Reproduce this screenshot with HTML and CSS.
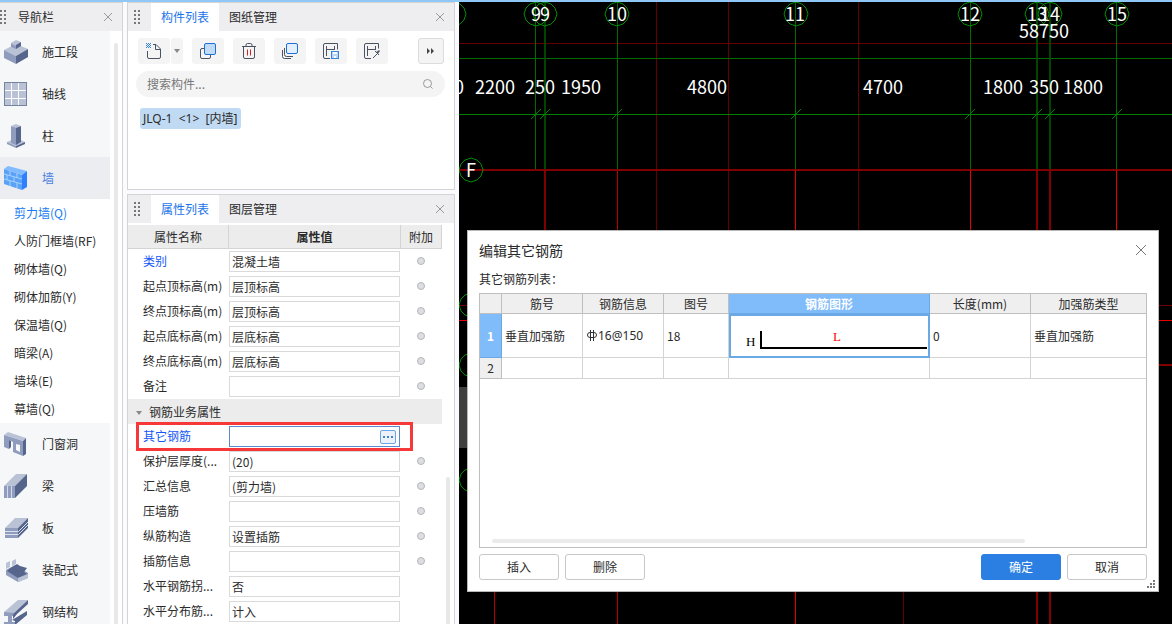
FILE: index.html
```html
<!DOCTYPE html>
<html lang="zh-CN">
<head>
<meta charset="utf-8">
<title>编辑其它钢筋</title>
<link rel="stylesheet" href="styles.css">
</head>
<body>
<div class="app">
  <nav class="nav">
    <header class="bar nav-bar">
      <svg class="grip" width="6" height="14" viewBox="0 0 6 14"><path d="M1 0v14M5 0v14"/></svg>
      <h1 class="nav-title">导航栏</h1>
      <button class="close" type="button" aria-label="关闭导航栏"><svg width="10" height="10" viewBox="0 0 10 10"><path d="M1 1l8 8M9 1l-8 8"/></svg></button>
    </header>
    <div class="nav-body">
      <div class="nav-list">
        <a class="nav-item" href="#"><svg width="24" height="24" viewBox="0 0 24 24"><path fill="#bac2d6" d="M0 10L12 4l12 5-12 7z"/><path fill="#8f9cbd" d="M0 10l12 6v8L0 18z"/><path fill="#56658b" d="M12 16l12-7v8l-12 7z"/><path fill="#bac2d6" d="M7 3l5-3 5 2-5 4z"/><path fill="#8f9cbd" d="M7 3l5 3v3L7 7z"/><path fill="#56658b" d="M12 5l5-3v4l-5 3z"/></svg>施工段</a>
        <a class="nav-item" href="#"><svg width="24" height="24" viewBox="0 0 24 24"><path fill="#76849f" d="M0 0h23v24H0z"/><path fill="#bac2d6" d="M1 1h21v22H1z"/><path stroke="#fff" fill="none" d="M7.500 1v22M14.500 1v22M1 8.500h21M1 16.500h21"/></svg>轴线</a>
        <a class="nav-item" href="#"><svg width="24" height="24" viewBox="0 0 24 24"><path fill="#bac2d6" d="M3 18l9-4 9 4-9 4z"/><path fill="#8f9cbd" d="M3 18l9 4v2l-9-4z"/><path fill="#56658b" d="M21 18l-9 4v2l9-4z"/><path fill="#8f9cbd" d="M7 2l5 1v18l-5-2z"/><path fill="#56658b" d="M12 3l5-1v16l-5 3z"/><path fill="#bac2d6" d="M7 2l5-2 5 2-5 2z"/></svg>柱</a>
        <a class="nav-item current" href="#"><svg width="24" height="24" viewBox="0 0 24 24"><path fill="#81bbff" d="M0 3l4-3 19 5-5 4z"/><path fill="#5aa2f8" d="M0 3l18 6v15L0 18z"/><path fill="#2f80ff" d="M18 9l5-4v16l-5 3z"/><path stroke="#a8d2ff" fill="none" d="M0 8l18 5M0 13l18 5M6 5v5M13 7v5M3 9v5M10 11v5M6 15v5M13 17v5"/></svg>墙</a>
        <div class="sub-list">
          <a class="current" href="#">剪力墙(Q)</a>
          <a href="#">人防门框墙(RF)</a>
          <a href="#">砌体墙(Q)</a>
          <a href="#">砌体加筋(Y)</a>
          <a href="#">保温墙(Q)</a>
          <a href="#">暗梁(A)</a>
          <a href="#">墙垛(E)</a>
          <a href="#">幕墙(Q)</a>
        </div>
        <a class="nav-item" href="#"><svg width="24" height="24" viewBox="0 0 24 24"><path fill="#bac2d6" d="M0 3l4-3 18 6-3 3z"/><path fill="#8f9cbd" fill-rule="evenodd" d="M0 3l19 6v15L9 20V10L5 8v9L0 15zM12 12v6l4 2v-7z"/><path fill="#56658b" d="M19 9l3-3v16l-3 2zM5 8l2 1v6l-2 2z"/></svg>门窗洞</a>
        <a class="nav-item" href="#"><svg width="24" height="24" viewBox="0 0 24 24"><path fill="#bac2d6" d="M0 12L12 0h11L11 12z"/><path fill="#8f9cbd" d="M0 12h11v12H0z"/><path fill="#56658b" d="M11 12L23 0v12L11 24z"/><path stroke="#d3d9e6" d="M3.500 12v12M7.500 12v12"/></svg>梁</a>
        <a class="nav-item" href="#"><svg width="24" height="24" viewBox="0 0 24 24"><path fill="#bac2d6" d="M1 12L11 2h13L14 12z"/><path fill="#8f9cbd" d="M1 12h13v10H1z"/><path fill="#56658b" d="M14 12L24 2v10L14 22z"/><path stroke="#dce2ed" fill="none" d="M1 15.500h13.500L24 6M1 18.500h13.500L24 9"/></svg>板</a>
        <a class="nav-item" href="#"><svg width="24" height="24" viewBox="0 0 24 24"><path fill="#8f9cbd" d="M2 12l9-5 13 8v5l-10 4-12-7z"/><path fill="#56658b" d="M5 11l8-5 3 2 7 2-3 4 3 2-9 4-11-7z"/><path fill="#bac2d6" d="M14 20l10-4v4l-10 4zM2 5l4-2v6l-4 2zM8 3l4-2v5l-4 2z"/></svg>装配式</a>
        <a class="nav-item" href="#"><svg width="24" height="24" viewBox="0 0 24 24"><path fill="#8f9cbd" d="M0 12h10v4H8v6h3v3H0v-3h4v-6H0z"/><path fill="#bac2d6" d="M0 12L14 0h10L10 13z"/><path fill="#56658b" d="M10 13L24 0v4L13 14l-4 5v-4zM8 20l15-9v4L11 25V21z"/></svg>钢结构</a>
      </div>
      <div class="nav-scroll"></div>
    </div>
  </nav>

  <div class="panels">
    <section class="panel">
      <header class="bar">
        <svg class="grip" width="6" height="14" viewBox="0 0 6 14"><path d="M1 0v14M5 0v14"/></svg>
        <button class="tab active" type="button">构件列表</button>
        <button class="tab" type="button">图纸管理</button>
        <button class="close" type="button" aria-label="关闭构件列表"><svg width="10" height="10" viewBox="0 0 10 10"><path d="M1 1l8 8M9 1l-8 8"/></svg></button>
      </header>
      <div class="toolbar">
        <div class="split">
          <button class="tool" type="button" aria-label="新建"><svg width="16" height="16" viewBox="0 0 16 16"><path class="ink" d="M1.500 8v6q0 1.500 1.500 1.500h10q1.500 0 1.500-1.500V6L10 1.500H7M9.500 2v4.500H14"/><path fill="#2f80e0" d="M0 0h1v1H0zM2 0h1v1H2zM4 0h1v1H4zM1 1h1v1H1zM3 1h1v1H3zM0 2h1v1H0zM2 2h1v1H2zM4 2h1v1H4zM1 3h1v1H1zM3 3h1v1H3zM0 4h1v1H0zM2 4h1v1H2zM4 4h1v1H4z"/></svg></button>
          <button class="tool drop" type="button" aria-label="新建选项"><svg width="6" height="4" viewBox="0 0 6 4"><path fill="#888" d="M0 0h6L3 4z"/></svg></button>
        </div>
        <button class="tool" type="button" aria-label="复制"><svg width="16" height="16" viewBox="0 0 16 16"><path class="ink" d="M4 5.500H2Q.5 5.500.5 7v7q0 1.500 1.500 1.500h7q1.500 0 1.500-1.500v-2"/><rect x="4.500" y=".5" width="11" height="11" rx="1.500" fill="#c3daf5" stroke="#1d70dc"/></svg></button>
        <button class="tool" type="button" aria-label="删除构件"><svg width="16" height="16" viewBox="0 0 16 16"><path class="ink" d="M1 3.500h14M5 3.500V2Q5 .5 6.500 .5h3Q11 .5 11 2v1.500M2.500 4v10q0 1.500 1.500 1.500h8q1.500 0 1.500-1.500V4"/><path stroke="#d6212c" d="M6.500 6.500v6M9.500 6.500v6"/></svg></button>
        <button class="tool" type="button" aria-label="层间复制"><svg width="16" height="16" viewBox="0 0 16 16"><path class="ink" d="M.5 7v6.500q0 2 2 2H9M2.500 5v6.500q0 2 2 2H11"/><rect x="4.500" y=".5" width="11" height="10" rx="1.500" fill="#e4effc" stroke="#1d70dc"/></svg></button>
        <button class="tool" type="button" aria-label="构件存档"><svg width="16" height="16" viewBox="0 0 16 16"><path class="ink" d="M7 15.500H2Q.5 15.500.5 14V2Q.5 .5 2 .5h12.500v6M3.500 3v10M3.500 6.500h8M11.500 3v4"/><rect x="8.500" y="8.500" width="7" height="7" fill="#bcd6f5" stroke="#3584e4"/><path fill="#fff" d="M10 9h4v2h-4zM11 13h2v2h-2z"/></svg></button>
        <button class="tool" type="button" aria-label="构件提取"><svg width="16" height="16" viewBox="0 0 16 16"><path class="ink" d="M7 15.500H2Q.5 15.500.5 14V2Q.5 .5 2 .5h12.500v5M3.500 3v10M3.500 6.500h8M11.500 3v4"/><path class="ink" d="M9 15l4-4M11 8l4 4"/><path fill="#5b6375" d="M12 9l3-2 1 1-2 3z"/></svg></button>
        <button class="tool more" type="button" aria-label="更多"><svg width="8" height="6" viewBox="0 0 8 6"><path fill="#444" d="M0 0l3 3-3 3zM4 0l3 3-3 3z"/></svg></button>
      </div>
      <label class="search">
        <input type="text" placeholder="搜索构件..." aria-label="搜索构件">
        <svg width="12" height="12" viewBox="0 0 12 12"><circle cx="5.500" cy="5.500" r="4" /><path d="M8.500 8.500l2 2"/></svg>
      </label>
      <div class="parts"><button class="part" type="button">JLQ-1&nbsp; &lt;1&gt;&nbsp; [内墙]</button></div>
    </section>

    <section class="panel props">
      <header class="bar">
        <svg class="grip" width="6" height="14" viewBox="0 0 6 14"><path d="M1 0v14M5 0v14"/></svg>
        <button class="tab active" type="button">属性列表</button>
        <button class="tab" type="button">图层管理</button>
        <button class="close" type="button" aria-label="关闭属性列表"><svg width="10" height="10" viewBox="0 0 10 10"><path d="M1 1l8 8M9 1l-8 8"/></svg></button>
      </header>
      <div class="props-body">
        <table class="prop-table">
          <thead><tr><th class="c-name">属性名称</th><th class="c-value">属性值</th><th class="c-extra">附加</th></tr></thead>
          <tbody>
            <tr><td class="key"><label for="p1">类别</label></td><td><input class="field" id="p1" value="混凝土墙"></td><td class="mark"><input type="checkbox" aria-label="附加 类别"></td></tr>
            <tr><td><label for="p2">起点顶标高(m)</label></td><td><input class="field" id="p2" value="层顶标高"></td><td class="mark"><input type="checkbox" aria-label="附加 起点顶标高"></td></tr>
            <tr><td><label for="p3">终点顶标高(m)</label></td><td><input class="field" id="p3" value="层顶标高"></td><td class="mark"><input type="checkbox" aria-label="附加 终点顶标高"></td></tr>
            <tr><td><label for="p4">起点底标高(m)</label></td><td><input class="field" id="p4" value="层底标高"></td><td class="mark"><input type="checkbox" aria-label="附加 起点底标高"></td></tr>
            <tr><td><label for="p5">终点底标高(m)</label></td><td><input class="field" id="p5" value="层底标高"></td><td class="mark"><input type="checkbox" aria-label="附加 终点底标高"></td></tr>
            <tr><td><label for="p6">备注</label></td><td><input class="field" id="p6"></td><td class="mark"><input type="checkbox" aria-label="附加 备注"></td></tr>
            <tr class="group"><th colspan="3"><svg width="6" height="4" viewBox="0 0 6 4"><path fill="#888" d="M0 0h6L3 4z"/></svg>钢筋业务属性</th></tr>
            <tr class="marked"><td class="key"><label for="p7">其它钢筋</label><i class="frame"></i></td><td><div class="field editing"><input id="p7"><button type="button" aria-label="编辑其它钢筋"><svg width="10" height="2" viewBox="0 0 10 2"><path fill="#3a82d6" d="M0 0h2v2H0zM4 0h2v2H4zM8 0h2v2H8z"/></svg></button></div></td><td></td></tr>
            <tr><td><label for="p8">保护层厚度(...</label></td><td><input class="field" id="p8" value="(20)"></td><td class="mark"><input type="checkbox" aria-label="附加 保护层厚度"></td></tr>
            <tr><td><label for="p9">汇总信息</label></td><td><input class="field" id="p9" value="(剪力墙)"></td><td class="mark"><input type="checkbox" aria-label="附加 汇总信息"></td></tr>
            <tr><td><label for="p10">压墙筋</label></td><td><input class="field" id="p10"></td><td class="mark"><input type="checkbox" aria-label="附加 压墙筋"></td></tr>
            <tr><td><label for="p11">纵筋构造</label></td><td><input class="field" id="p11" value="设置插筋"></td><td class="mark"><input type="checkbox" aria-label="附加 纵筋构造"></td></tr>
            <tr><td><label for="p12">插筋信息</label></td><td><input class="field" id="p12"></td><td class="mark"><input type="checkbox" aria-label="附加 插筋信息"></td></tr>
            <tr><td><label for="p13">水平钢筋拐...</label></td><td><input class="field" id="p13" value="否"></td><td></td></tr>
            <tr><td><label for="p14">水平分布筋...</label></td><td><input class="field" id="p14" value="计入"></td><td></td></tr>
          </tbody>
        </table>
        <div class="props-scroll"></div>
      </div>
    </section>
  </div>

  <main class="canvas">
    <svg class="drawing" width="100%" height="100%">
      <defs>
        <path id="ring" d="M0-12L6-10 10-6 12 0 10 6 6 10 0 12-6 10-10 6-12 0-10-6-6-10z" fill="none" stroke="#008c00"/>
        <path id="tick" d="M-5 5L5-5" stroke="#008000"/>
      </defs>
      <g transform="translate(-459 -2)">
        <g stroke="#640000">
          <path d="M459 43.500H2400M656.500 2V560M728.500 2V560M858.500 2V560M903.500 560V1600"/>
        </g>
        <g stroke="#006c00">
          <path d="M459 58.500H2400M535.500 2V170M617.500 2V170M795.500 2V170M970.500 2V170M1116.500 2V170"/>
          <path stroke="#004600" stroke-width="2" d="M545 2V170M1037 2V170M1050 2V170"/>
          <path stroke="#008000" d="M459 114.500H2400"/>
        </g>
        <g stroke="#800000" stroke-width="2">
          <path d="M459 170H2400M1037 170V1600M1050 170V1600M545 170V560M1100 365H2400"/>
          <path stroke="#e80000" stroke-width="1" d="M795.500 170V1600M970.500 170V560M1116.500 170V560M459 320.500H2400"/>
          <path stroke="#b80000" stroke-width="1" d="M617.500 170V1600M494.500 560V1600"/>
          <path stroke="#700000" stroke-width="1" d="M459 305.500H2400"/>
        </g>
        <use href="#ring" x="454" y="14"/><use href="#ring" x="536" y="14"/><use href="#ring" x="545" y="14"/>
        <use href="#ring" x="617" y="14"/><use href="#ring" x="796" y="14"/><use href="#ring" x="970" y="14"/>
        <use href="#ring" x="1037" y="14"/><use href="#ring" x="1050" y="14"/><use href="#ring" x="1117" y="14"/>
        <use href="#ring" x="471" y="170"/><use href="#ring" x="471" y="305"/><use href="#ring" x="471" y="365"/><use href="#ring" x="471" y="480"/>
        <use href="#tick" x="536" y="114"/><use href="#tick" x="545" y="114"/><use href="#tick" x="617" y="114"/><use href="#tick" x="796" y="114"/>
        <use href="#tick" x="970" y="114"/><use href="#tick" x="1037" y="114"/><use href="#tick" x="1050" y="114"/><use href="#tick" x="1117" y="114"/>
        <path fill="#3f3f3f" d="M459 387h10v61h-10z"/>
        <g class="dims">
          <text x="536" y="21">9</text><text x="545" y="21">9</text><text x="617" y="21">10</text><text x="795" y="21">11</text>
          <text x="970" y="21">12</text><text x="1037" y="21">13</text><text x="1050" y="21">14</text><text x="1117" y="21">15</text>
          <text x="1044" y="38">58750</text>
          <text x="459" y="94">0</text><text x="495" y="94">2200</text><text x="540" y="94">250</text><text x="581" y="94">1950</text>
          <text x="707" y="94">4800</text><text x="883" y="94">4700</text><text x="1003" y="94">1800</text><text x="1044" y="94">350</text><text x="1083" y="94">1800</text>
          <text x="471" y="177">F</text>
        </g>
      </g>
    </svg>

    <section class="dialog" role="dialog" aria-labelledby="dlg-title">
      <header class="dialog-head">
        <h2 id="dlg-title">编辑其它钢筋</h2>
        <button class="close" type="button" aria-label="关闭"><svg width="12" height="12" viewBox="0 0 12 12"><path d="M1 1l10 10M11 1L1 11"/></svg></button>
      </header>
      <p class="caption">其它钢筋列表：</p>
      <div class="sheet-box">
        <table class="sheet">
          <thead><tr><th class="w-no"></th><th class="w-mid">筋号</th><th class="w-mid">钢筋信息</th><th class="w-fig">图号</th><th class="w-shape picked">钢筋图形</th><th class="w-len">长度(mm)</th><th>加强筋类型</th></tr></thead>
          <tbody>
            <tr class="tall"><th class="picked">1</th><td>垂直加强筋</td><td><span class="rebar"><svg width="10" height="12" viewBox="0 0 10 12"><path fill="none" stroke="#333" d="M3.500 0v11M6.500 0v11M3 2.500h4Q9.500 2.500 9.500 5T7 7.500H3Q.5 7.500.5 5T3 2.500"/></svg>16@150</span></td><td>18</td>
              <td class="shape"><svg width="197" height="39" viewBox="0 0 197 39"><path fill="none" stroke="#000" stroke-width="2" d="M30 14v17h166"/><text x="15" y="29">H</text><text x="102" y="24" fill="#f00">L</text></svg></td><td>0</td><td>垂直加强筋</td></tr>
            <tr><th>2</th><td></td><td></td><td></td><td></td><td></td><td></td></tr>
          </tbody>
        </table>
        <div class="sheet-scroll"></div>
      </div>
      <footer class="actions">
        <button class="btn" type="button">插入</button>
        <button class="btn" type="button">删除</button>
        <button class="btn primary" type="button">确定</button>
        <button class="btn" type="button">取消</button>
      </footer>
      <svg class="resize" width="8" height="8" viewBox="0 0 8 8"><path fill="#777" d="M6 0h2v2H6zM3 3h2v2H3zM6 3h2v2H6zM0 6h2v2H0zM3 6h2v2H3zM6 6h2v2H6z"/></svg>
    </section>
  </main>
</div>
</body>
</html>
```
FILE: styles.css
```css
* { box-sizing: border-box; }

body {
  margin: 0;
  font: 12px/20px "Noto Sans CJK SC", sans-serif;
  color: #2b2b2b;
  background: #fafaff;
}

button, input { font: inherit; color: inherit; }
button { margin: 0; padding: 0; border: 0; background: none; }
svg { display: block; flex: none; }
h1, h2, p { margin: 0; font-weight: 400; }
a { color: inherit; text-decoration: none; }

.app {
  display: flex;
  gap: 4px;
  height: 100vh;
  border-top: 2px solid #8fc8f7;
  overflow: hidden;
}

/* shared title bars */
.bar {
  display: flex;
  align-items: stretch;
  height: 28px;
  flex: none;
  background: #eeeef1;
}
.grip { align-self: center; margin: 0 11px 0 6px; }
.grip path { stroke: #777; stroke-width: 2; stroke-dasharray: 2; }
.close { margin-left: auto; padding: 0 9px; display: flex; align-items: center; }
.close path { stroke: #999; fill: none; }

/* navigation */
.nav {
  display: flex;
  flex-direction: column;
  flex: none;
  width: 123px;
  border: solid #d4d4d4;
  border-width: 1px 1px 0 0;
  background: #fff;
}
.nav-bar .grip { margin: 0 12px 0 0; }
.nav-title { font-size: 12px; line-height: 28px; }
.nav-body { display: flex; gap: 4px; min-height: 0; flex: 1; }
.nav-list { width: 110px; overflow: hidden; }
.nav-item {
  display: flex;
  align-items: center;
  gap: 14px;
  height: 42px;
  padding-left: 4px;
  background: #f5f7f9;
}
.nav-item.current { background: #ebedf1; color: #4a7de0; }
.sub-list a { display: block; padding-left: 14px; line-height: 28px; }
.sub-list .current { color: #1a7cf0; }
.nav-scroll { width: 4px; margin-top: 12px; border-radius: 2px 2px 0 0; background: #e8e8e8; }

/* middle panels */
.panels { display: flex; flex-direction: column; gap: 4px; flex: none; width: 328px; }
.panel { border: 1px solid #d4d4d4; background: #fff; }
.tab { padding: 0 10px; }
.tab.active { background: #fff; color: #1a73e8; }

.toolbar { display: flex; gap: 9px; padding: 7px 10px; }
.tool {
  display: flex;
  align-items: center;
  justify-content: center;
  width: 32px;
  height: 26px;
  border-radius: 3px;
  background: #f4f4f4;
}
.split { display: flex; gap: 1px; }
.split .drop { width: 12px; }
.tool.more { width: 26px; margin-left: auto; border: 1px solid #dcdcdc; }
.ink { fill: none; stroke: #4b5262; }

.search {
  display: flex;
  align-items: center;
  height: 26px;
  margin: 0 9px 0 8px;
  padding: 0 11px;
  border-radius: 13px;
  background: #f4f4f4;
}
.search input { flex: 1; min-width: 0; padding: 0; border: 0; outline: 0; background: none; }
.search input::placeholder { color: #777; opacity: 1; }
.search svg { fill: none; stroke: #999; stroke-width: 1; }
.parts { height: 92px; padding: 11px 12px; }
.part { padding: 0 4px 0 3px; line-height: 21px; border-radius: 3px; background: #c1daf3; font-family: "Noto Sans", "Noto Sans CJK SC", sans-serif; }

/* property grid */
.props { flex: 1; min-height: 0; overflow: hidden; border-bottom: 0; }
.props-body { display: flex; gap: 4px; padding-top: 2px; height: 100%; }
.prop-table { flex: none; width: 314px; height: 0; border-collapse: separate; border-spacing: 0; table-layout: fixed; }
.prop-table thead th {
  height: 24px;
  padding: 0;
  border: solid #d4d4d4;
  border-width: 0 1px 1px 0;
  background: #ececec;
  font-weight: 400;
}
.prop-table thead .c-name { width: 101px; }
.prop-table thead .c-value { width: 172px; font-weight: 700; }
.prop-table thead .c-extra { width: 41px; }
.prop-table td { height: 25px; padding: 0; white-space: nowrap; }
.prop-table td:first-child { padding: 0 0 1px 15px; }
.key { color: #1457f5; }
.field {
  display: flex;
  align-items: center;
  width: 171px;
  height: 21px;
  padding: 0 2px;
  border: 1px solid #dadada;
  background: #fff;
}
.editing { border-color: #5c88d2; padding-right: 3px; }
.editing input { flex: 1; min-width: 0; height: 17px; padding: 0; border: 0; outline: 0; }
.editing button {
  display: flex;
  align-items: center;
  justify-content: center;
  width: 16px;
  height: 14px;
  border: 1px solid #6aa6ea;
  border-radius: 2px;
  background: #eef2f8;
}
.prop-table .mark { padding: 0 2px 2px 0; }
.mark input {
  display: block;
  appearance: none;
  width: 8px;
  height: 8px;
  margin: 0 auto;
  border: 1px solid #b4b6ba;
  border-radius: 50%;
  background: #dcdee1;
}
.group th { height: 25px; padding: 0 0 0 8px; text-align: left; font-weight: 400; background: #ececec; }
.group svg { display: inline-block; margin-right: 7px; vertical-align: middle; }
.marked { position: relative; }
.frame { position: absolute; inset: -2px 29px -2px 8px; border: 3px solid #f63838; pointer-events: none; }
.props-scroll { width: 4px; margin-top: 252px; border-radius: 2px; background: #e8e8e8; }

/* drawing area */
.canvas { position: relative; flex: 1; min-width: 0; background: #000; }
.drawing { position: absolute; inset: 0; overflow: hidden; }
.dims { fill: #fff; font-size: 18px; text-anchor: middle; }

.dialog {
  position: absolute;
  inset: 228px 13px 32px 8px;
  display: flex;
  flex-direction: column;
  padding: 8px 11px 11px;
  border: 1px solid #b8b8b8;
  background: #fff;
}
.dialog-head { display: flex; align-items: center; height: 22px; }
.dialog-head h2 { font-size: 14px; line-height: 20px; }
.dialog-head .close { padding: 0; }
.dialog-head .close path { stroke: #777; }
.caption { margin: 8px 0 4px; line-height: 20px; }
.sheet-box {
  display: flex;
  flex-direction: column;
  flex: 1;
  min-height: 0;
  border: 1px solid #bfbfbf;
}
.sheet { width: 100%; line-height: 18px; border-collapse: separate; border-spacing: 0; table-layout: fixed; }
.sheet th { height: 20px; padding: 0; font-weight: 400; background: #efefef; border: solid #bfbfbf; border-width: 0 1px 1px 0; }
.sheet td { height: 21px; padding: 0 3px; border: solid #d4d4d4; border-width: 0 1px 1px 0; }
.sheet tr > :last-child { border-right: 0; }
.sheet .tall td { height: 44px; }
.w-no { width: 22px; }
.w-mid { width: 81px; }
.w-fig { width: 65px; }
.w-shape { width: 201px; }
.w-len { width: 101px; }
.sheet .picked { background: #80bbfa; border-color: #6aa8e6; color: #fff; font-weight: 700; }
.sheet .shape { padding: 0; border: 2px solid #6aa8e6; }
.shape text { font: 13px "Liberation Serif", serif; }
.rebar { display: flex; align-items: center; gap: 1px; padding-left: 1px; font-family: "Noto Sans", "Noto Sans CJK SC", sans-serif; }
.sheet-scroll { width: 80%; height: 4px; margin: auto 0 4px 12px; border-radius: 2px; background: #ebebeb; }

.actions { display: flex; gap: 6px; margin-top: 6px; }
.btn { width: 80px; height: 26px; border: 1px solid #c8c8c8; border-radius: 3px; background: #fff; }
.btn.primary { margin-left: auto; border-color: #2c7fe2; background: #2c7fe2; color: #fff; }
.resize { position: absolute; right: 3px; bottom: 3px; }
```
